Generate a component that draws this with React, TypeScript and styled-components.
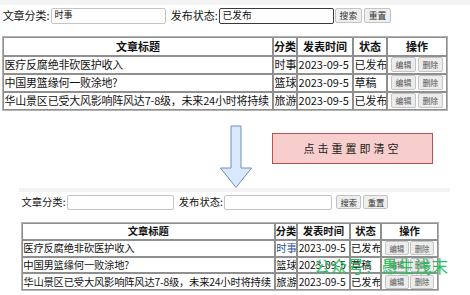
import React from "react";
import styled, { createGlobalStyle } from "styled-components";

const GlobalStyle = createGlobalStyle`
  html, body {
    margin: 0;
    padding: 0;
    background: #fff;
  }
  body {
    font-family: "Noto Sans CJK SC", "Noto Sans", sans-serif;
    color: #111;
  }
`;

interface Article {
  title: string;
  category: string;
  date: string;
  status: string;
}

const articles: Article[] = [
  { title: "医疗反腐绝非砍医护收入", category: "时事", date: "2023-09-5", status: "已发布" },
  { title: "中国男篮缘何一败涂地?", category: "篮球", date: "2023-09-5", status: "草稿" },
  {
    title: "华山景区已受大风影响阵风达7-8级，未来24小时将持续",
    category: "旅游",
    date: "2023-09-5",
    status: "已发布",
  },
];

const Page = styled.div`
  position: relative;
  width: 470px;
  height: 295px;
  overflow: hidden;
  background: #fff;
`;

const Shot = styled.section<{ $size: number; $indent?: number; $width?: number }>`
  font-size: ${(p) => p.$size}px;
  line-height: 1.2;
  margin-left: ${(p) => p.$indent ?? 0}px;
  width: ${(p) => (p.$width ? `${p.$width}px` : "auto")};
  background: #fff;
`;

const Band = styled.div`
  height: 0.42em;
  background: #f3f3f3;
`;

const SearchForm = styled.form`
  display: flex;
  align-items: center;
  padding: 0.27em 0 0 0.24em;
`;

const Label = styled.label`
  white-space: nowrap;
  margin-right: 0.1em;
`;

const FieldText = styled.span<{ $scale?: number }>`
  font-size: ${(p) => p.$scale ?? 0.82}em;
`;

const FieldBox = styled.div<{ $focused?: boolean }>`
  box-sizing: border-box;
  display: flex;
  align-items: center;
  width: 10.45em;
  height: 1.45em;
  margin-right: ${(p) => (p.$focused ? "0.12em" : "0.45em")};
  padding: 0 0.25em;
  background: #fff;
  border: ${(p) => (p.$focused ? "1.5px solid #3a3a3a" : "1px solid #c4c4c4")};
  border-radius: 2px;
`;

const Button = styled.button`
  box-sizing: border-box;
  height: 1.3em;
  padding: 0 0.32em;
  margin-right: 0.22em;
  font-family: inherit;
  font-size: inherit;
  background: #efefef;
  border: 1px solid #c2c2c2;
  border-radius: 2px;
  color: #333;
  display: flex;
  align-items: center;
  justify-content: center;

  span {
    font-size: 0.8em;
  }
`;

const Table = styled.table`
  table-layout: fixed;
  width: 40.4em;
  margin: 1.18em 0 0 0.18em;
  border-collapse: separate;
  border-spacing: 0;
  border: 1px solid #b3b3b3;
`;

const Th = styled.th<{ $w: number }>`
  box-sizing: border-box;
  width: ${(p) => p.$w}em;
  height: 1.64em;
  padding: 0;
  border: 1px solid #8f8f8f;
  font-weight: 700;
  text-align: center;
  white-space: nowrap;
`;

const Td = styled.td<{ $tint?: string; $tight?: boolean }>`
  box-sizing: border-box;
  height: 1.64em;
  padding: 0 0.05em;
  border: 1px solid #8f8f8f;
  white-space: nowrap;
  overflow: hidden;
  vertical-align: middle;
  letter-spacing: ${(p) => (p.$tight ? "-0.02em" : "normal")};
  color: ${(p) => p.$tint ?? "#111"};
`;

const OpsCell = styled.div`
  display: flex;
  justify-content: center;
  gap: 0.15em;
`;

const OpButton = styled.button`
  box-sizing: border-box;
  width: 2.3em;
  height: 1.3em;
  padding: 0;
  font-family: inherit;
  font-size: inherit;
  background: #ececec;
  border: 1px solid #c4c4c4;
  border-radius: 2px;
  color: #555;
  display: flex;
  align-items: center;
  justify-content: center;

  span {
    font-size: 0.72em;
  }
`;

const Annotation = styled.div`
  display: flex;
  align-items: flex-start;
  height: 77px;
  padding-left: 219px;
`;

const Arrow = styled.svg`
  margin-top: 14px;
  flex: none;
`;

const Note = styled.div`
  box-sizing: border-box;
  width: 161px;
  height: 31px;
  margin: 22px 0 0 19px;
  display: flex;
  align-items: center;
  justify-content: center;
  background: #f8cecc;
  border: 1px solid #b85450;
  font-size: 11px;
  font-weight: 400;
  letter-spacing: 3px;
  color: #222;
`;

const Watermark = styled.div`
  position: absolute;
  left: 314px;
  top: 254px;
  font-size: 16.5px;
  font-weight: 400;
  letter-spacing: 0.3px;
  color: #22c35a;
  white-space: nowrap;
  pointer-events: none;
`;

const columns = [
  { label: "文章标题", w: 24.55 },
  { label: "分类", w: 2.18 },
  { label: "发表时间", w: 5.09 },
  { label: "状态", w: 3.09 },
  { label: "操作", w: 5.45 },
];

interface PanelProps {
  size: number;
  indent?: number;
  width?: number;
  category: string;
  status: string;
  focused?: boolean;
  categoryTint?: string;
}

const ArticlePanel = ({ size, indent, width, category, status, focused, categoryTint }: PanelProps) => (
  <Shot $size={size} $indent={indent} $width={width}>
    <Band />
    <SearchForm onSubmit={(e) => e.preventDefault()}>
      <Label>文章分类:</Label>
      <FieldBox>
        <FieldText>{category}</FieldText>
      </FieldBox>
      <Label>发布状态:</Label>
      <FieldBox $focused={focused}>
        <FieldText $scale={0.88}>{status}</FieldText>
      </FieldBox>
      <Button type="button">
        <span>搜索</span>
      </Button>
      <Button type="button">
        <span>重置</span>
      </Button>
    </SearchForm>
    <Table>
      <thead>
        <tr>
          {columns.map((c) => (
            <Th key={c.label} $w={c.w}>
              {c.label}
            </Th>
          ))}
        </tr>
      </thead>
      <tbody>
        {articles.map((a, i) => (
          <tr key={a.title}>
            <Td $tight>{a.title}</Td>
            <Td $tint={i === 0 ? categoryTint : undefined}>{a.category}</Td>
            <Td>{a.date}</Td>
            <Td>{a.status}</Td>
            <Td>
              <OpsCell>
                <OpButton type="button">
                  <span>编辑</span>
                </OpButton>
                <OpButton type="button">
                  <span>删除</span>
                </OpButton>
              </OpsCell>
            </Td>
          </tr>
        ))}
      </tbody>
    </Table>
  </Shot>
);

const App = () => {
  return (
    <Page>
      <GlobalStyle />
      <ArticlePanel size={11} category="时事" status="已发布" focused />
      <Annotation>
        <Arrow width="34" height="64" viewBox="0 0 34 64">
          <path
            d="M12 1 H22 V43 H32.5 L17 62.5 L1.5 43 H12 Z"
            fill="#dae8fc"
            stroke="#6c8ebf"
            strokeWidth="1"
          />
        </Arrow>
        <Note>点击重置即清空</Note>
      </Annotation>
      <ArticlePanel size={10.3} indent={19} width={431} category="" status="" categoryTint="#1d4f9c" />
      <Watermark>公众号：愚生浅末</Watermark>
    </Page>
  );
};

export default App;
